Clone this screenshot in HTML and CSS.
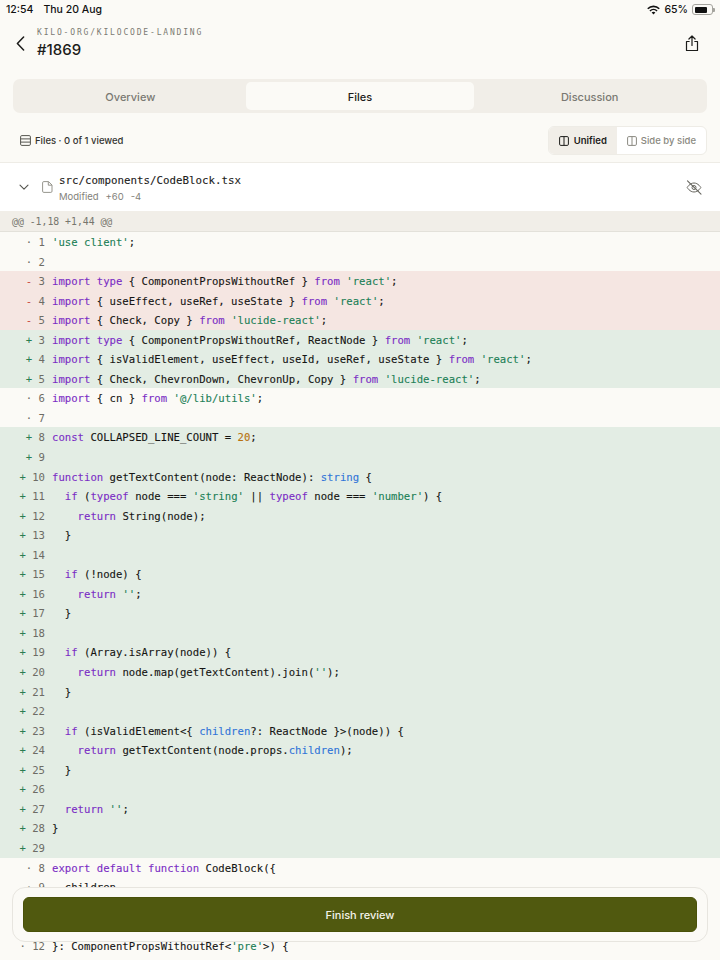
FILE: index.html
```html
<!DOCTYPE html>
<html lang="en">
<head>
<meta charset="UTF-8">
<meta name="viewport" content="width=device-width, initial-scale=1.0">
<title>#1869 - Files</title>
<link rel="stylesheet" href="styles.css">
</head>
<body>
<div class="screen">
    <div class="status">
        <div class="status-left"><span>12:54</span><span>Thu 20 Aug</span></div>
        <div class="status-right">
            <svg width="13" height="10" viewBox="0 0 13 10"><path d="M6.5 9.6 4.6 7.6a2.7 2.7 0 0 1 3.8 0zM3.5 6.5 2.4 5.4a5.8 5.8 0 0 1 8.2 0L9.5 6.5a4.3 4.3 0 0 0-6 0zM1.3 4.3.2 3.2a8.9 8.9 0 0 1 12.6 0l-1.1 1.1a7.4 7.4 0 0 0-10.4 0z" fill="#111"/></svg>
            <span>65%</span>
            <span class="battery"><span class="battery-fill"></span></span>
            <span class="battery-nub"></span>
        </div>
    </div>

    <div class="topbar">
        <svg class="back" width="9" height="15" viewBox="0 0 9 15"><path d="M7.600 1 1.400 7.500l6.200 6.500" fill="none" stroke="#1c1c1a" stroke-width="1.500" stroke-linecap="round" stroke-linejoin="round"/></svg>
        <div class="title-block">
            <div class="repo">KILO-ORG/KILOCODE-LANDING</div>
            <div class="pr-number">#1869</div>
        </div>
        <svg class="share" width="14" height="17" viewBox="0 0 14 17"><path d="M7 10.500V1.200M3.900 4 7 1l3.100 3M4.200 6.500H1.500v9h11v-9H9.800" fill="none" stroke="#1c1c1a" stroke-width="1.200" stroke-linecap="round" stroke-linejoin="round"/></svg>
    </div>

    <div class="tabs">
        <div class="tab">Overview</div>
        <div class="tab active">Files</div>
        <div class="tab">Discussion</div>
    </div>

    <div class="toolbar">
        <div class="viewed">
            <svg width="11" height="11" viewBox="0 0 11 11"><rect x=".6" y=".6" width="9.800" height="9.800" rx="1.200" fill="none" stroke="#55554f"/><path d="M.6 3.900h9.800M.6 7.100h9.800" stroke="#55554f"/></svg>
            <span>Files · 0 of 1 viewed</span>
        </div>
        <div class="toggle">
            <div class="toggle-item on">
                <svg width="10" height="10" viewBox="0 0 10 10"><rect x=".6" y=".6" width="8.800" height="8.800" rx="1.200" fill="none" stroke="currentColor"/><path d="M5 .6v8.800" stroke="currentColor"/></svg>
                <span>Unified</span>
            </div>
            <div class="toggle-item">
                <svg width="10" height="10" viewBox="0 0 10 10"><rect x=".6" y=".6" width="8.800" height="8.800" rx="1.200" fill="none" stroke="currentColor"/><path d="M5 .6v8.800" stroke="currentColor"/></svg>
                <span>Side by side</span>
            </div>
        </div>
    </div>

    <div class="file-head">
        <svg class="chevron" width="10" height="7" viewBox="0 0 10 7"><path d="m1 1.200 4 4 4-4" fill="none" stroke="#55554f" stroke-width="1.100" stroke-linecap="round" stroke-linejoin="round"/></svg>
        <svg class="file-icon" width="11" height="12" viewBox="0 0 11 12"><path d="M1.800.6h4.700l3.500 3.400v6.200a1.200 1.200 0 0 1-1.200 1.200H1.800A1.200 1.200 0 0 1 .6 10.200V1.800A1.200 1.200 0 0 1 1.800.6zM6.300.8v3.400h3.500" fill="none" stroke="#8a8980" stroke-width=".9" stroke-linejoin="round"/></svg>
        <div class="file-info">
            <div class="file-name">src/components/CodeBlock.tsx</div>
            <div class="file-meta"><span>Modified</span><span>+60</span><span>-4</span></div>
        </div>
        <svg class="eye" width="16" height="15" viewBox="0 0 16 15"><path d="M1.200 7.500S3.700 3 8 3s6.800 4.500 6.800 4.500S12.300 12 8 12 1.200 7.500 1.200 7.500z" fill="none" stroke="#66655e" stroke-width="1"/><circle cx="8" cy="7.500" r="2" fill="none" stroke="#66655e" stroke-width="1"/><path d="m1.500 .8 13.500 13.400" stroke="#66655e" stroke-width="1.100" stroke-linecap="round"/></svg>
    </div>

    <div class="hunk">@@ -1,18 +1,44 @@</div>

    <div class="diff">
        <div class="row"><span class="gut"><i class="dot">·</i> 1</span><code><s>'use client'</s>;</code></div>
        <div class="row"><span class="gut"><i class="dot">·</i> 2</span><code></code></div>
        <div class="row del"><span class="gut"><i class="minus">-</i> 3</span><code><b>import</b> <b>type</b> { ComponentPropsWithoutRef } <b>from</b> <s>'react'</s>;</code></div>
        <div class="row del"><span class="gut"><i class="minus">-</i> 4</span><code><b>import</b> { useEffect, useRef, useState } <b>from</b> <s>'react'</s>;</code></div>
        <div class="row del"><span class="gut"><i class="minus">-</i> 5</span><code><b>import</b> { Check, Copy } <b>from</b> <s>'lucide-react'</s>;</code></div>
        <div class="row add"><span class="gut"><i class="plus">+</i> 3</span><code><b>import</b> <b>type</b> { ComponentPropsWithoutRef, ReactNode } <b>from</b> <s>'react'</s>;</code></div>
        <div class="row add"><span class="gut"><i class="plus">+</i> 4</span><code><b>import</b> { isValidElement, useEffect, useId, useRef, useState } <b>from</b> <s>'react'</s>;</code></div>
        <div class="row add"><span class="gut"><i class="plus">+</i> 5</span><code><b>import</b> { Check, ChevronDown, ChevronUp, Copy } <b>from</b> <s>'lucide-react'</s>;</code></div>
        <div class="row"><span class="gut"><i class="dot">·</i> 6</span><code><b>import</b> { cn } <b>from</b> <s>'@/lib/utils'</s>;</code></div>
        <div class="row"><span class="gut"><i class="dot">·</i> 7</span><code></code></div>
        <div class="row add"><span class="gut"><i class="plus">+</i> 8</span><code><b>const</b> COLLAPSED_LINE_COUNT = <u>20</u>;</code></div>
        <div class="row add"><span class="gut"><i class="plus">+</i> 9</span><code></code></div>
        <div class="row add"><span class="gut"><i class="plus">+</i> 10</span><code><b>function</b> getTextContent(node: ReactNode): <em>string</em> {</code></div>
        <div class="row add"><span class="gut"><i class="plus">+</i> 11</span><code>  <b>if</b> (<b>typeof</b> node === <s>'string'</s> || <b>typeof</b> node === <s>'number'</s>) {</code></div>
        <div class="row add"><span class="gut"><i class="plus">+</i> 12</span><code>    <b>return</b> String(node);</code></div>
        <div class="row add"><span class="gut"><i class="plus">+</i> 13</span><code>  }</code></div>
        <div class="row add"><span class="gut"><i class="plus">+</i> 14</span><code></code></div>
        <div class="row add"><span class="gut"><i class="plus">+</i> 15</span><code>  <b>if</b> (!node) {</code></div>
        <div class="row add"><span class="gut"><i class="plus">+</i> 16</span><code>    <b>return</b> <s>''</s>;</code></div>
        <div class="row add"><span class="gut"><i class="plus">+</i> 17</span><code>  }</code></div>
        <div class="row add"><span class="gut"><i class="plus">+</i> 18</span><code></code></div>
        <div class="row add"><span class="gut"><i class="plus">+</i> 19</span><code>  <b>if</b> (Array.isArray(node)) {</code></div>
        <div class="row add"><span class="gut"><i class="plus">+</i> 20</span><code>    <b>return</b> node.map(getTextContent).join(<s>''</s>);</code></div>
        <div class="row add"><span class="gut"><i class="plus">+</i> 21</span><code>  }</code></div>
        <div class="row add"><span class="gut"><i class="plus">+</i> 22</span><code></code></div>
        <div class="row add"><span class="gut"><i class="plus">+</i> 23</span><code>  <b>if</b> (isValidElement&lt;{ <em>children</em>?: ReactNode }&gt;(node)) {</code></div>
        <div class="row add"><span class="gut"><i class="plus">+</i> 24</span><code>    <b>return</b> getTextContent(node.props.<em>children</em>);</code></div>
        <div class="row add"><span class="gut"><i class="plus">+</i> 25</span><code>  }</code></div>
        <div class="row add"><span class="gut"><i class="plus">+</i> 26</span><code></code></div>
        <div class="row add"><span class="gut"><i class="plus">+</i> 27</span><code>  <b>return</b> <s>''</s>;</code></div>
        <div class="row add"><span class="gut"><i class="plus">+</i> 28</span><code>}</code></div>
        <div class="row add"><span class="gut"><i class="plus">+</i> 29</span><code></code></div>
        <div class="row"><span class="gut"><i class="dot">·</i> 8</span><code><b>export</b> <b>default</b> <b>function</b> CodeBlock({</code></div>
        <div class="row"><span class="gut"><i class="dot">·</i> 9</span><code>  children,</code></div>
        <div class="row"><span class="gut"><i class="dot">·</i> 10</span><code>  className,</code></div>
        <div class="row"><span class="gut"><i class="dot">·</i> 11</span><code>  ...props</code></div>
        <div class="row"><span class="gut"><i class="dot">·</i> 12</span><code>}: ComponentPropsWithoutRef&lt;<s>'pre'</s>&gt;) {</code></div>
    </div>

    <div class="finish-panel">
        <div class="finish-btn">Finish review</div>
    </div>
</div>
</body>
</html>
```

FILE: styles.css
```css
* {
    box-sizing: border-box;
}
body {
    margin: 0;
    background: #fbfaf6;
    color: #1c1c1a;
    font-family: Inter, "Noto Sans", sans-serif;
}
.screen {
    position: relative;
    width: 720px;
    height: 960px;
    overflow: hidden;
}

/* status bar */
.status {
    display: flex;
    justify-content: space-between;
    align-items: center;
    height: 18px;
    padding: 1px 5px 0 6px;
    font-size: 10.5px;
    font-weight: 500;
    color: #111;
}
.status-left {
    display: flex;
    gap: 10px;
}
.status-right {
    display: flex;
    align-items: center;
    gap: 4px;
}
.battery {
    display: block;
    width: 21px;
    height: 11px;
    padding: 1.5px;
    border: 1px solid #a5a49e;
    border-radius: 3px;
}
.battery-fill {
    display: block;
    width: 12px;
    height: 100%;
    background: #111;
    border-radius: 1px;
}
.battery-nub {
    width: 2px;
    height: 4px;
    margin-left: -4px;
    background: #a5a49e;
    border-radius: 0 1px 1px 0;
}

/* header */
.topbar {
    display: flex;
    align-items: center;
    height: 61px;
    padding: 0 21px 11px 16px;
}
.back {
    margin-right: 12px;
}
.title-block {
    flex: 1;
}
.repo {
    font-family: "DejaVu Sans Mono", monospace;
    font-size: 8px;
    letter-spacing: 1.83px;
    line-height: 12px;
    color: #7c7b73;
}
.pr-number {
    margin-top: 1px;
    font-size: 15px;
    font-weight: 500;
    line-height: 20px;
}

/* tabs */
.tabs {
    display: grid;
    grid-template-columns: repeat(3, 1fr);
    gap: 1px;
    height: 34px;
    margin: 0 13px;
    padding: 3px;
    background: #f1eee8;
    border-radius: 7px;
}
.tab {
    display: flex;
    align-items: center;
    justify-content: center;
    padding-top: 1px;
    font-size: 11px;
    font-weight: 500;
    color: #7a7972;
    border-radius: 5px;
}
.tab.active {
    background: #fbfaf6;
    color: #1c1c1a;
}

/* toolbar */
.toolbar {
    display: flex;
    justify-content: space-between;
    align-items: center;
    height: 50px;
    padding: 13px 13px 7px 20px;
    border-bottom: 1px solid #eeece6;
}
.viewed {
    display: flex;
    align-items: center;
    gap: 4px;
    font-size: 9.5px;
    font-weight: 500;
    color: #33332f;
}
.toggle {
    display: flex;
    height: 29px;
    overflow: hidden;
    background: #fff;
    border: 1px solid #eeece6;
    border-radius: 6px;
}
.toggle-item {
    display: flex;
    align-items: center;
    gap: 4px;
    padding: 0 10px;
    font-size: 9.5px;
    font-weight: 500;
    color: #8a8980;
}
.toggle-item.on {
    gap: 5px;
    background: #f1eee8;
    font-weight: 600;
    color: #1c1c1a;
}

/* file header */
.file-head {
    display: flex;
    align-items: center;
    height: 48px;
    padding: 0 18px 0 19px;
    background: #fff;
}
.chevron {
    margin-right: 13px;
}
.file-icon {
    margin-right: 6px;
}
.file-info {
    flex: 1;
    padding-top: 3px;
}
.file-name {
    font-family: "DejaVu Sans Mono", monospace;
    font-size: 10.8px;
    line-height: 15px;
    color: #1c1c1a;
    -webkit-text-stroke: .1px;
}
.file-meta {
    display: flex;
    gap: 7px;
    margin-top: 2px;
    font-size: 9.5px;
    line-height: 14px;
    color: #83827a;
}
.hunk {
    height: 21px;
    padding-left: 12px;
    font-family: "DejaVu Sans Mono", monospace;
    font-size: 9.8px;
    line-height: 21px;
    color: #77766e;
    background: #f1eee8;
    border-bottom: 1px solid #e3e1da;
}

/* diff rows */
.row {
    display: flex;
    height: 19.55px;
    padding-top: 1px;
    font-family: "DejaVu Sans Mono", monospace;
    font-size: 10.63px;
    line-height: 19.55px;
    white-space: pre;
    -webkit-text-stroke: .1px;
}
.row.add {
    background: #e3ede4;
}
.row.del {
    background: #f5e6e2;
}
.gut {
    flex: none;
    width: 45px;
    margin-right: 7px;
    text-align: right;
    color: #6d6c65;
    -webkit-text-stroke: 0;
}
.gut i {
    font-style: normal;
}
.plus {
    color: #2a7d52;
}
.minus {
    color: #c9483f;
}
code {
    font-family: inherit;
    color: #151513;
}
code b {
    font-weight: 400;
    color: #7a2cc4;
}
code s {
    text-decoration: none;
    color: #1b7f56;
}
code em {
    font-style: normal;
    color: #2f74d8;
}
code u {
    text-decoration: none;
    color: #b8720f;
}

/* bottom button */
.finish-panel {
    position: absolute;
    left: 12px;
    top: 887px;
    width: 696px;
    height: 55px;
    padding: 9px 10px;
    background: #fbfaf6;
    border: 1px solid #e7e5df;
    border-radius: 13px;
}
.finish-btn {
    display: flex;
    align-items: center;
    justify-content: center;
    height: 35px;
    font-size: 11px;
    font-weight: 500;
    color: #f4f3ea;
    background: #50590f;
    border: 1px solid #495109;
    border-radius: 6px;
}
```
